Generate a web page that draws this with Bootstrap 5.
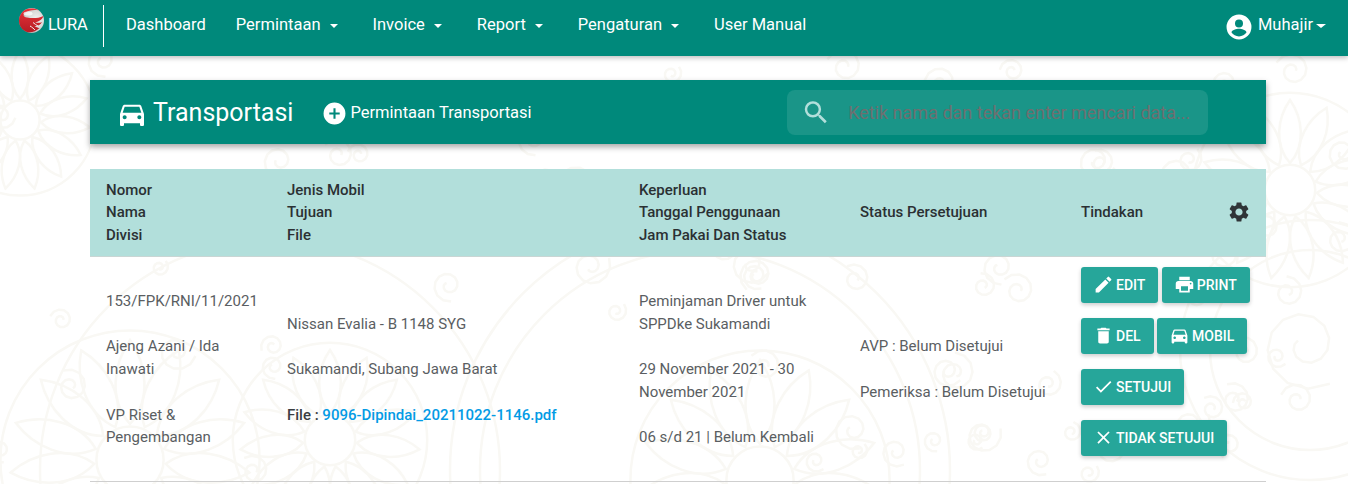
<!DOCTYPE html>
<html lang="en">
<head>
  <meta charset="UTF-8">
  <title>LURA | Transportasi</title>
  <meta name="viewport" content="width=device-width, initial-scale=1.0">
  <link href="https://cdn.jsdelivr.net/npm/bootstrap@5.3.3/dist/css/bootstrap.min.css" rel="stylesheet">
  <style>
    html, body {
      height: 484px;
      overflow: hidden;
    }

    body {
      background: #fff;
      font-family: Roboto, "Liberation Sans", sans-serif;
      font-size: 15px;
      line-height: 22.5px;
      color: #5a5e62;
      position: relative;
    }

    .bg-batik {
      position: absolute;
      left: 0;
      top: 0;
      z-index: -1;
    }

    /* navbar */
    .top-bar {
      background: #00897b;
      height: 56px;
      padding: 0 19px 7px;
      box-shadow: 0 2px 5px rgba(0, 0, 0, .25);
    }

    .brand-box {
      height: 42px;
      width: 85px;
      margin-right: 7px;
      margin-top: 3px;
      border-right: 1px solid #fff;
      color: #fff;
      font-size: 16.5px;
      letter-spacing: -.1px;
      text-decoration: none;
      position: relative;
      flex: none;
    }

    .brand-box svg {
      position: absolute;
      left: 0;
      top: 3px;
    }

    .brand-box span {
      position: absolute;
      left: 29px;
      top: 9px;
    }

    .top-link {
      color: #fff;
      font-size: 16.5px;
      line-height: 24px;
      padding: 0 15px;
      text-decoration: none;
      display: flex;
      align-items: center;
    }

    .top-link:hover {
      color: #e0f2f1;
    }

    .caret-mark {
      width: 0;
      height: 0;
      margin-left: 9px;
      margin-right: 5px;
      margin-top: 2px;
      border-top: 4.5px solid #fff;
      border-left: 4.5px solid transparent;
      border-right: 4.5px solid transparent;
    }

    .user-link {
      padding: 0;
      margin-right: 3px;
    }

    .user-link svg {
      margin: 4px 6px 0 0;
    }

    .user-link .caret-mark {
      margin: 2px 0 0 3px;
      border-top-width: 4.5px;
      border-left-width: 5px;
      border-right-width: 5px;
    }

    /* page */
    .page-wrap {
      padding: 24px 82px 0 90px;
    }

    .title-panel {
      background: #00897b;
      height: 64px;
      box-shadow: 0 3px 6px rgba(0, 0, 0, .35);
      color: #fff;
      padding: 2px 0 0 26px;
      margin-bottom: 25px;
    }

    .title-panel > svg {
      margin-top: 2px;
    }

    .title-panel h1 {
      font-size: 25px;
      font-weight: 400;
      line-height: 28px;
      margin: 0 29px 0 5px;
    }

    .add-link {
      color: #fff;
      font-size: 16.5px;
      text-decoration: none;
    }

    .add-link svg {
      margin-right: 3px;
    }

    .search-box {
      position: absolute;
      left: 787px;
      top: 90px;
      width: 421px;
      height: 45px;
      background: rgba(255, 255, 255, .1);
      border-radius: 8px;
      padding-left: 14px;
    }

    .search-box input {
      background: transparent;
      border: 0;
      outline: 0;
      width: 370px;
      margin-left: 17px;
      font-size: 18px;
      color: #fff;
      padding: 1px 0 0;
    }

    .search-box input::placeholder {
      color: #6d6f70;
      opacity: 1;
    }

    /* table */
    .trans-table {
      width: 100%;
      table-layout: fixed;
      margin: 0;
      --bs-table-bg: transparent;
      color: #5a5e62;
    }

    .trans-table thead th {
      background: #b2dfdb;
      color: #2b3033;
      font-weight: 500;
      height: 87px;
      padding: 0 16px;
      vertical-align: middle;
      border-bottom: 1px solid #c9d6d4;
    }

    .trans-table tbody td {
      padding: 11px 16px 9px;
      vertical-align: middle;
      line-height: 22.8px;
      border-bottom: 1px solid #cfcfcf;
    }

    .w-a { width: 181px; }
    .w-b { width: 352px; }
    .w-c { width: 221px; }
    .w-d { width: 221px; }
    .w-e { width: 201px; }

    .gear-btn {
      position: absolute;
      right: 0;
      top: 50%;
      transform: translateY(-50%);
      margin-right: 15px;
      display: flex;
    }

    .file-line {
      color: #3a3e42;
      font-weight: 500;
    }

    .file-line a {
      color: #039be5;
      text-decoration: none;
    }

    .act-row {
      display: flex;
      gap: 3.5px;
      margin-bottom: 15px;
    }

    .act-btn {
      background: #26a69a;
      border: 0;
      border-radius: 3px;
      color: #fff;
      height: 36px;
      font-size: 14px;
      font-weight: 500;
      line-height: 36px;
      padding: 0 13px 0 12px;
      display: inline-flex;
      align-items: center;
      box-shadow: 0 2px 4px rgba(0, 0, 0, .2);
    }

    .act-btn:hover {
      background: #26a69a;
      color: #fff;
    }

    .act-btn svg {
      margin-right: 2px;
    }

    .trans-table tbody td.act-pad {
      padding: 10px 12px 10px 16px;
    }
  </style>
</head>
<body>

<svg class="bg-batik" id="batik" width="1348" height="484" fill="none" stroke="#f9f8f4" stroke-width="2.500"></svg>

<!-- Navbar -->
<nav class="top-bar d-flex align-items-center">
  <a class="brand-box d-block" href="#">
    <svg width="25" height="25" viewBox="0 0 25 25">
      <defs>
        <radialGradient id="ball" cx="70%" cy="45%" r="70%">
          <stop offset="0" stop-color="#f4f4f4"/>
          <stop offset=".6" stop-color="#d2d2d2"/>
          <stop offset="1" stop-color="#9a9a9a"/>
        </radialGradient>
        <linearGradient id="red" x1="0" y1="0" x2="0" y2="1">
          <stop offset="0" stop-color="#e8333a"/>
          <stop offset="1" stop-color="#b51c24"/>
        </linearGradient>
      </defs>
      <circle cx="12.500" cy="12.500" r="12.500" fill="url(#ball)"/>
      <path d="M4 3.500C7 .5 14-1 20 2.500 16 1.500 9 2 5.500 5.500 3.500 7.500 5 9 8 9.500 13 10.500 19 10.500 24.500 8 23 12 19 14 16 14.500 19 15 21 15 23 14 21.500 17 18.500 18.500 15.500 18 18 19.500 19.500 20 20.500 20 17 23.500 12 25 8 24 3.500 22.500 0 18 0 12.500 0 9 1.500 6 4 3.500Z" fill="url(#red)"/>
      <path d="M14 14.500C16 16 17 17 19 18M11 18C13 19 15 21 16 22" stroke="#f2f2f2" stroke-width="1" fill="none"/>
      <ellipse cx="9" cy="5.500" rx="4.500" ry="2" fill="#fff" opacity=".75"/>
    </svg>
    <span>LURA</span>
  </a>
  <a class="top-link" href="#">Dashboard</a>
  <a class="top-link" href="#">Permintaan<i class="caret-mark"></i></a>
  <a class="top-link" href="#">Invoice<i class="caret-mark"></i></a>
  <a class="top-link" href="#">Report<i class="caret-mark"></i></a>
  <a class="top-link" href="#">Pengaturan<i class="caret-mark"></i></a>
  <a class="top-link" href="#">User Manual</a>
  <a class="top-link user-link ms-auto" href="#">
    <svg width="26" height="26" viewBox="0 0 24 24" fill="#fff"><path d="M12 0.5A11.5 11.5 0 1 0 12 23.500 11.500 11.500 0 0 0 12 .5ZM12 5a3.700 3.700 0 1 1 0 7.400A3.700 3.700 0 0 1 12 5ZM12 20.700c-2.900 0-5.400-1.400-6.900-3.600.1-2.200 4.600-3.400 6.900-3.400s6.800 1.200 6.900 3.400c-1.500 2.200-4 3.600-6.900 3.600Z"/></svg>
    Muhajir<i class="caret-mark"></i>
  </a>
</nav>

<div class="page-wrap">
  <!-- Title panel -->
  <div class="title-panel d-flex align-items-center">
    <svg width="32" height="32" viewBox="0 0 24 24" fill="#fff"><path d="M18.920 6.010C18.720 5.420 18.160 5 17.500 5h-11c-.66 0-1.210.42-1.420 1.010L3 12v8c0 .55.45 1 1 1h1c.55 0 1-.45 1-1v-1h12v1c0 .55.45 1 1 1h1c.55 0 1-.45 1-1v-8l-2.080-5.990ZM6.500 16C5.670 16 5 15.330 5 14.500S5.670 13 6.500 13 8 13.670 8 14.500 7.330 16 6.500 16Zm11 0c-.83 0-1.500-.67-1.500-1.500s.67-1.500 1.500-1.500 1.500.67 1.500 1.500-.67 1.500-1.500 1.500ZM5 11l1.500-4.500h11L19 11H5Z"/></svg>
    <h1>Transportasi</h1>
    <a class="add-link d-flex align-items-center" href="#">
      <svg width="25" height="25" viewBox="0 0 24 24" fill="#fff"><path d="M12 1.500A10.500 10.500 0 1 0 12 22.500 10.500 10.500 0 0 0 12 1.500ZM17 13h-4v4h-2v-4H7v-2h4V7h2v4h4v2Z"/></svg>
      Permintaan Transportasi
    </a>
  </div>
  <div class="search-box d-flex align-items-center">
    <svg width="31" height="31" viewBox="0 0 24 24" fill="#b2dfdb"><path d="M15.500 14h-.79l-.28-.27A6.470 6.470 0 0 0 16 9.500 6.500 6.500 0 1 0 9.500 16c1.610 0 3.090-.59 4.230-1.570l.27.28v.79l5 4.990L20.490 19l-4.990-5Zm-6 0C7.010 14 5 11.990 5 9.500S7.010 5 9.500 5 14 7.010 14 9.500 11.990 14 9.500 14Z"/></svg>
    <input type="text" placeholder="Ketik nama dan tekan enter mencari data...">
  </div>

  <!-- Table -->
  <table class="table trans-table">
    <colgroup>
      <col class="w-a"><col class="w-b"><col class="w-c"><col class="w-d"><col class="w-e">
    </colgroup>
    <thead>
      <tr>
        <th>Nomor<br>Nama<br>Divisi</th>
        <th>Jenis Mobil<br>Tujuan<br>File</th>
        <th>Keperluan<br>Tanggal Penggunaan<br>Jam Pakai Dan Status</th>
        <th>Status Persetujuan</th>
        <th class="position-relative">Tindakan
          <span class="gear-btn">
            <svg width="24" height="24" viewBox="0 0 24 24" fill="#2f3437"><path d="M19.140 12.940c.04-.3.06-.61.06-.94 0-.32-.02-.64-.07-.94l2.030-1.580a.49.49 0 0 0 .12-.61l-1.920-3.320a.488.488 0 0 0-.59-.22l-2.390.96c-.5-.38-1.030-.7-1.620-.94l-.36-2.540a.484.484 0 0 0-.48-.41h-3.840c-.24 0-.43.17-.47.41l-.36 2.540c-.59.24-1.130.57-1.620.94l-2.390-.96c-.22-.08-.47 0-.59.22L2.740 8.870c-.12.21-.08.47.12.61l2.030 1.580c-.05.3-.09.63-.09.94s.02.64.07.94l-2.030 1.580a.49.49 0 0 0-.12.61l1.920 3.320c.12.22.37.29.59.22l2.390-.96c.5.38 1.030.7 1.620.94l.36 2.540c.05.24.24.41.48.41h3.840c.24 0 .44-.17.47-.41l.36-2.540c.59-.24 1.130-.56 1.620-.94l2.390.96c.22.08.47 0 .59-.22l1.920-3.320c.12-.22.07-.47-.12-.61l-2.010-1.580ZM12 15.600c-1.980 0-3.600-1.620-3.600-3.600s1.620-3.600 3.600-3.600 3.600 1.620 3.600 3.600-1.620 3.600-3.600 3.600Z"/></svg>
          </span>
        </th>
      </tr>
    </thead>
    <tbody>
      <tr>
        <td>153/FPK/RNI/11/2021<br><br>Ajeng Azani / Ida Inawati<br><br>VP Riset &amp; Pengembangan</td>
        <td>Nissan Evalia - B 1148 SYG<br><br>Sukamandi, Subang Jawa Barat<br><br><span class="file-line">File : <a href="#">9096-Dipindai_20211022-1146.pdf</a></span></td>
        <td>Peminjaman Driver untuk SPPDke Sukamandi<br><br>29 November 2021 - 30 November 2021<br><br>06 s/d 21 | Belum Kembali</td>
        <td>AVP : Belum Disetujui<br><br>Pemeriksa : Belum Disetujui</td>
        <td class="act-pad">
          <div class="act-row">
            <button class="btn act-btn"><svg width="21" height="21" viewBox="0 0 24 24" fill="#fff"><path d="M3 17.250V21h3.750L17.810 9.940l-3.750-3.750L3 17.250ZM20.710 7.040a1 1 0 0 0 0-1.410l-2.340-2.340a1 1 0 0 0-1.410 0l-1.830 1.830 3.750 3.750 1.830-1.830Z"/></svg>EDIT</button>
            <button class="btn act-btn"><svg width="21" height="21" viewBox="0 0 24 24" fill="#fff"><path d="M19 8H5c-1.660 0-3 1.340-3 3v6h4v4h12v-4h4v-6c0-1.660-1.340-3-3-3Zm-3 11H8v-5h8v5Zm3-7c-.55 0-1-.45-1-1s.45-1 1-1 1 .45 1 1-.45 1-1 1Zm-1-9H6v4h12V3Z"/></svg>PRINT</button>
          </div>
          <div class="act-row">
            <button class="btn act-btn"><svg width="21" height="21" viewBox="0 0 24 24" fill="#fff"><path d="M6 19c0 1.100.9 2 2 2h8c1.100 0 2-.9 2-2V7H6v12ZM19 4h-3.500l-1-1h-5l-1 1H5v2h14V4Z"/></svg>DEL</button>
            <button class="btn act-btn"><svg width="21" height="21" viewBox="0 0 24 24" fill="#fff"><path d="M18.920 6.010C18.720 5.420 18.160 5 17.500 5h-11c-.66 0-1.210.42-1.420 1.010L3 12v8c0 .55.45 1 1 1h1c.55 0 1-.45 1-1v-1h12v1c0 .55.45 1 1 1h1c.55 0 1-.45 1-1v-8l-2.080-5.990ZM6.500 16C5.670 16 5 15.330 5 14.500S5.670 13 6.500 13 8 13.670 8 14.500 7.330 16 6.500 16Zm11 0c-.83 0-1.500-.67-1.500-1.500s.67-1.500 1.500-1.500 1.500.67 1.500 1.500-.67 1.500-1.500 1.500ZM5 11l1.500-4.500h11L19 11H5Z"/></svg>MOBIL</button>
          </div>
          <div class="act-row">
            <button class="btn act-btn"><svg width="21" height="21" viewBox="0 0 24 24" fill="#fff"><path d="M9 16.170 4.830 12l-1.420 1.410L9 19 21 7l-1.410-1.410L9 16.170Z"/></svg>SETUJUI</button>
          </div>
          <div class="act-row">
            <button class="btn act-btn"><svg width="21" height="21" viewBox="0 0 24 24" fill="#fff"><path d="M19 6.410 17.590 5 12 10.590 6.410 5 5 6.410 10.590 12 5 17.590 6.410 19 12 13.410 17.590 19 19 17.590 13.410 12 19 6.410Z"/></svg>TIDAK SETUJUI</button>
          </div>
        </td>
      </tr>
    </tbody>
  </table>
</div>

<script>
  // faint batik background: petal fans, long arcs and a scatter of small curls
  const batik = document.getElementById("batik");
  let out = "";
  let seed = 7;
  const rnd = () => {
    seed = (seed * 16807) % 2147483647;
    return seed / 2147483647;
  };

  function petals(cx, cy, r) {
    out += `<circle cx="${cx}" cy="${cy}" r="${r * 0.28}"/><circle cx="${cx}" cy="${cy}" r="${r * 1.08}"/>`;
    for (let a = 0; a < 360; a += 24) {
      out += `<path transform="translate(${cx} ${cy}) rotate(${a})" d="M0 ${-r * 0.3}C${r * 0.18} ${-r * 0.5} ${r * 0.14} ${-r * 0.8} 0 ${-r}C${-r * 0.14} ${-r * 0.8} ${-r * 0.18} ${-r * 0.5} 0 ${-r * 0.3}Z"/>`;
    }
  }

  function curl(cx, cy, r, turn) {
    let d = "";
    for (let t = 0; t <= 9; t += 0.5) {
      const k = r * (1 - t / 11);
      const x = cx + Math.cos(t + turn) * k;
      const y = cy + Math.sin(t + turn) * k;
      d += (t === 0 ? "M" : "L") + x.toFixed(1) + " " + y.toFixed(1);
    }
    out += `<path d="${d}"/>`;
  }

  [[130, 460, 120], [330, 440, 90], [1290, 190, 90], [20, 120, 70], [760, 480, 120]].forEach(p => petals(...p));
  [[700, 470, 220], [700, 470, 250], [1310, 350, 100], [1310, 350, 130], [270, 470, 230]].forEach(([x, y, r]) => {
    out += `<circle cx="${x}" cy="${y}" r="${r}"/>`;
  });
  for (let i = 0; i < 90; i++) {
    curl(rnd() * 1348, 60 + rnd() * 424, 9 + rnd() * 12, rnd() * 6);
  }
  curl(1305, 345, 46, 1);
  batik.innerHTML = out;
</script>

<script src="https://cdn.jsdelivr.net/npm/bootstrap@5.3.3/dist/js/bootstrap.bundle.min.js"></script>
</body>
</html>
